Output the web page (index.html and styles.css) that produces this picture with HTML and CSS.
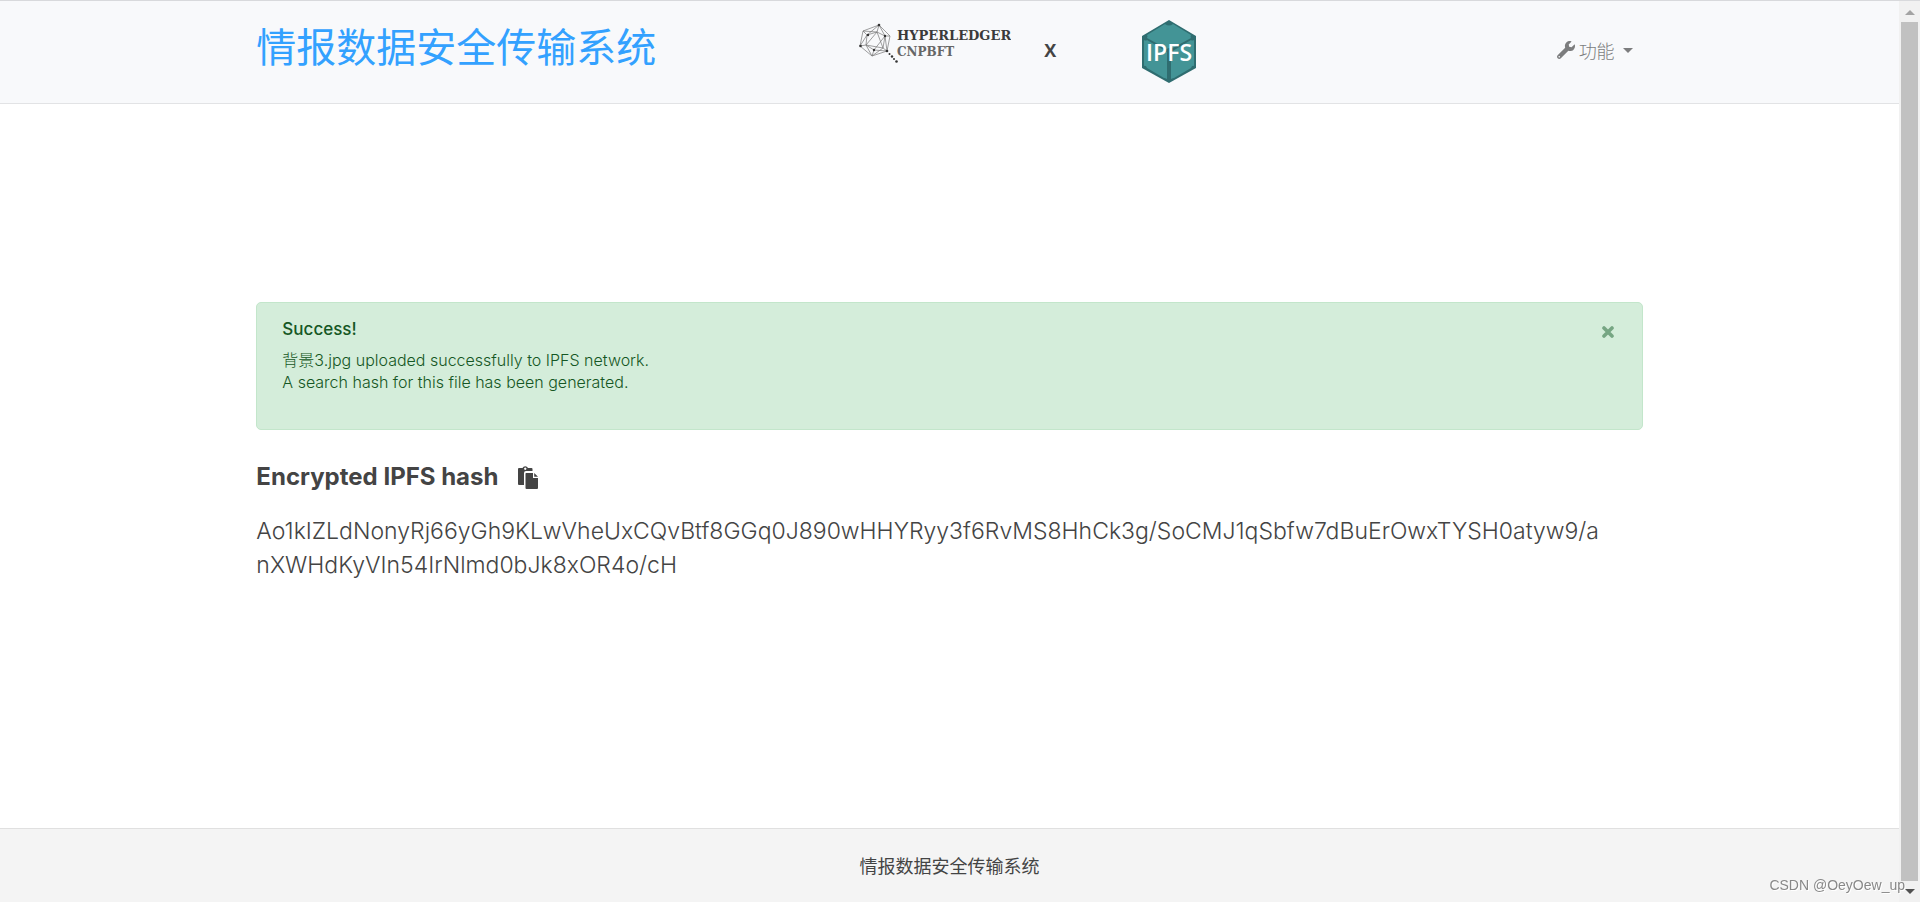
FILE: index.html
```html
<!DOCTYPE html>
<html lang="zh-CN">
<head>
<meta charset="utf-8">
<title>情报数据安全传输系统</title>
<link rel="stylesheet" href="styles.css">
</head>
<body>
<div class="page">
  <header class="navbar">
    <div class="container navbar-inner">
      <a class="brand" href="#">情报数据安全传输系统</a>
      <div class="partners">
        <svg class="hyperledger" width="152" height="44" viewBox="0 0 152 44" role="img" aria-label="Hyperledger CNPBFT">
          <g fill="none" stroke="#777" stroke-width=".7">
            <path d="M20 4 4 10 1 25 13 35 28 30 31 15Z"/>
            <path d="M20 4 8 14 4 10M20 4 26 15 31 15M8 14 1 25 7 24 18 11 26 15 28 30M18 11 4 10M18 11 20 4M18 11 24 27 7 24 13 35 24 27 28 30M8 14 7 24M8 14 18 11M26 15 24 27M15 29 7 24M15 29 26 15M15 29 28 30M13 35 15 29"/>
          </g>
          <g fill="#333">
            <circle cx="20" cy="4" r="1.3"/><circle cx="1.5" cy="25" r="1.3"/><circle cx="9" cy="14" r="1.2"/><circle cx="26" cy="15" r="1.2"/><circle cx="15" cy="29" r="1.2"/><circle cx="28" cy="30" r="1.3"/>
            <circle cx="30.500" cy="33" r="1"/><circle cx="33" cy="35.500" r="1.2"/><circle cx="35" cy="38" r="1"/><circle cx="37.500" cy="40.500" r="1.3"/>
          </g>
          <text class="logo-word" x="38" y="19">HYPERLEDGER</text>
          <text class="logo-word logo-sub" x="38" y="35">CNPBFT</text>
        </svg>
        <span class="times">X</span>
        <svg class="ipfs" width="54" height="64" viewBox="0 0 54 64" role="img" aria-label="IPFS">
          <path fill="#2f6d70" d="M27 0 54 16V48L27 63 0 48V16Z"/>
          <path fill="#439496" d="M23 4Q27 7 31 4L49 15Q48 17 49 18L29 29Q27 27 25 29L5 18Q6 16 5 15ZM2 20Q4 21 5 20L25 32V59Q23 58 22 58L5 48Q4 45 2 46ZM52 20Q50 21 49 20L29 32V59Q31 58 32 58L49 48Q50 45 52 46Z"/>
          <text class="ipfs-word" x="27" y="41" text-anchor="middle">IPFS</text>
        </svg>
      </div>
      <button class="menu" type="button">
        <svg width="18" height="18" viewBox="0 0 512 512" aria-hidden="true"><path fill="currentColor" d="M507.730 109.100c-2.240-9.030-13.540-12.090-20.120-5.510l-74.360 74.360-67.880-11.310-11.310-67.880 74.360-74.360c6.620-6.620 3.430-17.900-5.660-20.160-47.380-11.740-99.550.910-136.580 37.930-39.640 39.640-50.550 97.100-34.050 147.200L18.740 402.760c-24.990 24.990-24.990 65.510 0 90.500 24.990 24.990 65.510 24.990 90.500 0l213.210-213.210c50.120 16.710 107.470 5.680 147.370-34.220 37.070-37.070 49.700-89.320 37.910-136.730zM64 472c-13.250 0-24-10.750-24-24 0-13.260 10.750-24 24-24s24 10.740 24 24c0 13.250-10.750 24-24 24z"/></svg>
        <span>功能</span>
        <span class="caret"></span>
      </button>
    </div>
  </header>

  <main class="container content">
    <section class="alert" role="alert">
      <div>
        <h4 class="alert-title">Success!</h4>
        <p class="alert-text">背景3.jpg uploaded successfully to IPFS network.<br>A search hash for this file has been generated.</p>
      </div>
      <button class="close" type="button" aria-label="Close">
        <svg width="12" height="12" viewBox="0 0 12 12"><path d="M2 2 10 10M10 2 2 10" stroke="currentColor" stroke-width="3.600" stroke-linecap="round"/></svg>
      </button>
    </section>
    <div class="hash-head">
      <h2 class="hash-title">Encrypted IPFS hash</h2>
      <button class="copy" type="button" aria-label="Copy hash">
        <svg width="20" height="23" viewBox="0 0 20 23"><path fill="currentColor" fill-rule="evenodd" d="M1 2H4.500A3 3 0 0 1 10 2H13.500Q14.500 2 14.500 3V5H8Q6 5 6 7V19H1Q0 19 0 18V3Q0 2 1 2ZM7.200 1.500A1.200 1.200 0 1 0 7.300 1.500Z"/><path fill="currentColor" d="M8 7H15V12H20V22Q20 23 19 23H8.500Q7.500 23 7.500 22V7.500ZM16.200 7 20 10.800H16.200Z"/></svg>
      </button>
    </div>
    <p class="hash">Ao1kIZLdNonyRj66yGh9KLwVheUxCQvBtf8GGq0J890wHHYRyy3f6RvMS8HhCk3g/SoCMJ1qSbfw7dBuErOwxTYSH0atyw9/a<br>nXWHdKyVIn54IrNlmd0bJk8xOR4o/cH</p>
  </main>

  <footer class="footer">情报数据安全传输系统</footer>
</div>
<div class="scrollbar" aria-hidden="true">
  <span class="arrow arrow-up"></span>
  <span class="thumb"></span>
  <span class="arrow arrow-down"></span>
</div>
<span class="watermark">CSDN @OeyOew_up</span>
</body>
</html>
```
FILE: styles.css
```css
* { box-sizing: border-box; }

body {
  display: flex;
  min-height: 100vh;
  margin: 0;
  color: #444;
  background: #fff;
  font-family: Inter, "Noto Sans CJK SC", sans-serif;
  font-weight: 300;
}

button {
  padding: 0;
  border: 0;
  background: none;
  color: inherit;
  font: inherit;
  cursor: pointer;
}

svg { display: block; }

.page {
  flex: 1;
  min-width: 0;
  display: flex;
  flex-direction: column;
}

.container {
  width: 73%;
  margin: 0 auto;
}

.navbar {
  padding: 19px 0;
  border-top: 1px solid #d8d9dc;
  border-bottom: 1px solid #e2e3e5;
  background: #f8f9fb;
}

.navbar-inner {
  display: flex;
  align-items: center;
}

.brand {
  padding-bottom: 8px;
  color: #33a1ff;
  font-size: 40px;
  font-weight: 400;
  line-height: 48px;
  text-decoration: none;
}

.partners {
  display: flex;
  align-items: center;
  margin-left: 203px;
}

.hyperledger { margin-bottom: 18px; }

.logo-word {
  fill: #3a3a3a;
  font-family: "DejaVu Serif", serif;
  font-size: 13px;
  font-weight: 700;
}

.logo-sub {
  fill: #666;
  font-size: 12px;
}

.times {
  margin: 0 86px 4px 33px;
  font-family: "Open Sans", sans-serif;
  font-size: 18px;
  font-weight: 700;
}

.ipfs-word {
  fill: #fff;
  font-family: "Open Sans", sans-serif;
  font-size: 23px;
  font-weight: 600;
}

.menu {
  display: flex;
  align-items: center;
  gap: 4px;
  margin-left: auto;
  padding: 0 10px 4px 0;
  color: #7c7d7e;
  font-size: 18px;
}

.caret {
  margin-left: 4px;
  border: 5px solid transparent;
  border-top-color: currentColor;
  border-bottom: 0;
}

.content {
  flex: 1;
  padding: 198px 0 32px;
}

.alert {
  display: flex;
  align-items: flex-start;
  justify-content: space-between;
  padding: 15px 28px 36px 25px;
  border: 1px solid #c3e6cb;
  border-radius: 5px;
  background: #d4edda;
  color: #155724;
}

.alert-title {
  margin: 0 0 8px;
  font-size: 17px;
  font-weight: 500;
  line-height: 23px;
}

.alert-text {
  margin: 0;
  font-size: 16px;
  line-height: 22px;
}

.close {
  margin-top: 8px;
  color: #76a683;
}

.hash-head {
  display: flex;
  align-items: center;
  gap: 20px;
  margin-top: 32px;
}

.hash-title {
  margin: 0;
  font-size: 24px;
  font-weight: 700;
  line-height: 30px;
}

.hash {
  margin: 22px 0 0;
  font-size: 23px;
  line-height: 34px;
  word-break: break-all;
}

.footer {
  padding: 26px 0 23px;
  border-top: 1px solid #e0e0e0;
  background: #f4f4f4;
  font-size: 18px;
  font-weight: 400;
  line-height: 24px;
  text-align: center;
}

.scrollbar {
  width: 21px;
  display: flex;
  flex-direction: column;
  align-items: center;
  border-top: 1px solid #d8d9dc;
  background: #f1f1f1;
}

.thumb {
  flex: 1;
  width: 17px;
  background: #c1c1c1;
}

.arrow {
  border: 5px solid transparent;
}

.arrow-up {
  margin: 9px 0 7px;
  border-top: 0;
  border-bottom-color: #a3a3a3;
}

.arrow-down {
  margin: 8px 0;
  border-bottom: 0;
  border-top-color: #505050;
}

.watermark {
  position: fixed;
  right: 15px;
  bottom: 9px;
  color: #888;
  font-family: "Liberation Sans", sans-serif;
  font-size: 14px;
  font-weight: 400;
  line-height: 16px;
  text-shadow: 1px 1px 0 #fff;
}
```
